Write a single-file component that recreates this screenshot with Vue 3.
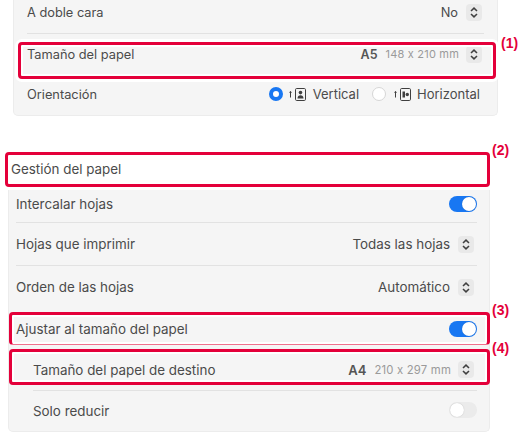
<script setup>
const rowsA = [
  { label: 'Intercalar hojas', cls: 'r-a', toggle: true },
  { label: 'Hojas que imprimir', cls: 'r-b', value: 'Todas las hojas', line: true },
  { label: 'Orden de las hojas', cls: 'r-b', value: 'Automático', line: true },
]
</script>

<template>
  <div class="page">
    <section class="panel top">
      <div class="row r1">
        <span>A doble cara</span>
        <span class="end"><span>No</span>
          <span class="stepper"><svg viewBox="0 0 16 16"><path d="M5 6.5 8 3.6l3 2.9M5 9.5l3 2.9 3-2.9"/></svg></span>
        </span>
      </div>
      <div class="row r2 line">
        <span>Tamaño del papel</span>
        <span class="end"><b class="size">A5</b><span class="dim">148 x 210 mm</span>
          <span class="stepper"><svg viewBox="0 0 16 16"><path d="M5 6.5 8 3.6l3 2.9M5 9.5l3 2.9 3-2.9"/></svg></span>
        </span>
        <div class="mark m1"><span class="tag t1">(1)</span></div>
      </div>
      <div class="row r3">
        <span>Orientación</span>
        <span class="end orient">
          <span class="radio on"></span>
          <svg class="oicon" viewBox="0 0 18 16"><path class="thin" d="M1.500 11.500V5.500"/><path d="M0 6.800 1.500 5 3 6.800z"/><rect class="thin" x="6.500" y="2.500" width="10" height="12" rx="1.200"/><circle cx="11.500" cy="6.600" r="1.800"/><path d="M8.500 12.500c0-2.300 1.300-3.200 3-3.200s3 .9 3 3.200z"/></svg>
          <span>Vertical</span>
          <span class="radio off"></span>
          <svg class="oicon second" viewBox="0 0 18 16"><path class="thin" d="M1.500 11.500V5.500"/><path d="M0 6.800 1.500 5 3 6.800z"/><rect class="thin" x="6.500" y="2.500" width="10" height="12" rx="1.200"/><path d="M8.500 5.500h2.500v6H8.500z"/><circle cx="13.300" cy="8.500" r="1.700"/></svg>
          <span>Horizontal</span>
        </span>
      </div>
    </section>

    <div class="heading">
      Gestión del papel
      <div class="mark m2"><span class="tag t2">(2)</span></div>
    </div>

    <section class="panel lower">
      <div v-for="r in rowsA" :key="r.label" class="row" :class="[r.cls, { line: r.line }]">
        <span>{{ r.label }}</span>
        <span class="toggle on" v-if="r.toggle"></span>
        <span class="end" v-else><span>{{ r.value }}</span>
          <span class="stepper"><svg viewBox="0 0 16 16"><path d="M5 6.5 8 3.6l3 2.9M5 9.5l3 2.9 3-2.9"/></svg></span>
        </span>
      </div>
      <div class="row r-c line">
        <span>Ajustar al tamaño del papel</span>
        <span class="toggle on"></span>
        <div class="mark m3"><span class="tag t3">(3)</span></div>
      </div>
      <div class="row r-d">
        <span class="indent">Tamaño del papel de destino</span>
        <span class="end"><b class="size">A4</b><span class="dim">210 x 297 mm</span>
          <span class="stepper"><svg viewBox="0 0 16 16"><path d="M5 6.5 8 3.6l3 2.9M5 9.5l3 2.9 3-2.9"/></svg></span>
        </span>
        <div class="mark m4"><span class="tag t4">(4)</span></div>
      </div>
      <div class="row r-e">
        <span>Solo reducir</span>
        <span class="toggle off"></span>
      </div>
    </section>
  </div>
</template>

<style>
html, body { margin: 0; background: #fff; }
</style>

<style scoped>
.page {
  width: 520px;
  height: 436px;
  overflow: hidden;
  font-family: Inter, "Liberation Sans", sans-serif;
  font-size: 12.8px;
  color: #4b4b4b;
  box-sizing: border-box;
}
.panel {
  background: #f5f5f5;
  border: 1px solid #ececec;
  border-top: 0;
  box-sizing: border-box;
  border-radius: 0 0 5px 5px;
}
.top { margin: 0 22px 0 13px; height: 116px; padding: 0 13px; }
.lower {
  margin: 3px 30px 0 8px;
  height: 242px;
  padding: 0 12px 0 7px;
  font-size: 13.4px;
}
.row {
  position: relative;
  display: flex;
  align-items: center;
  justify-content: space-between;
  box-sizing: border-box;
}
.line { border-top: 1px solid #e2e2e2; }
.r1 { height: 33px; padding-bottom: 9px; }
.r2 { height: 41px; }
.r3 { height: 41px; padding-bottom: 1px; }
.r-a { height: 32px; padding-bottom: 5px; }
.r-b { height: 43px; }
.r-c { height: 41px; border-top-color: transparent; padding-bottom: 1px; }
.r-d { height: 41px; }
.r-e { height: 42px; margin-left: 17px; border-top: 1px solid #e2e2e2; padding-bottom: 1px; }
.indent { margin-left: 17px; }
.end { display: flex; align-items: center; gap: 8px; margin-right: 2px; }
.lower .end { margin-right: 3px; }
.stepper {
  width: 16px;
  height: 17px;
  border-radius: 4px;
  background: #e9e9e9;
  display: block;
}
.stepper svg { display: block; width: 16px; height: 17px; fill: none; stroke: #3f3f3f; stroke-width: 1.5; }
.size { font-weight: 600; font-size: 12.5px; color: #555; }
.lower .size { font-size: 13px; }
.dim { font-size: 11px; color: #9a9a9a; letter-spacing: 0.2px; margin-right: -1px; }
.lower .dim { font-size: 11.3px; }
.end.orient { gap: 0; margin-right: 4px; font-size: 13px; }
.radio {
  width: 14px;
  height: 14px;
  border-radius: 50%;
  box-sizing: border-box;
  display: block;
}
.radio.on { background: #fff; border: 4px solid #1877f2; }
.radio.off { background: #fff; border: 1px solid #d6d6d6; margin-left: 13px; }
.oicon { width: 18px; height: 16px; margin: 0 6px; fill: #3f3f3f; display: block; }
.oicon.second { margin: 0 5px 0 8px; }
.oicon .thin { fill: none; stroke: #3f3f3f; stroke-width: 1; }
.toggle {
  width: 28px;
  height: 16px;
  border-radius: 8px;
  position: relative;
  display: block;
  flex: none;
}
.toggle::after {
  content: "";
  position: absolute;
  top: 1px;
  width: 14px;
  height: 14px;
  border-radius: 50%;
  background: #fff;
  box-shadow: 0 0 1px rgba(0, 0, 0, 0.25);
}
.toggle.on { background: #1877f2; }
.toggle.on::after { right: 1px; }
.toggle.off { background: #ebebeb; margin-bottom: 2px; }
.toggle.off::after { left: 1px; }
.heading {
  position: relative;
  margin: 36px 30px 0 11px;
  height: 35px;
  line-height: 34px;
  font-size: 13.4px;
}
.mark {
  position: absolute;
  box-sizing: border-box;
  border: 3px solid #e4003a;
  border-radius: 4px;
  pointer-events: none;
}
.m1 {
  left: -9px; right: -12px; top: 8px; height: 37px;
  box-shadow: 0 0 0 3px #fff, inset 0 0 0 2px #fff;
}
.m2 { left: -6px; right: 0; top: 0; bottom: 0; }
.m3 {
  left: -7px; right: -13px; top: 3px; height: 33px;
  border-bottom: 1px solid #f0708c;
  box-shadow: inset 0 0 0 2px #fff;
}
.m4 {
  left: -7px; right: -13px; top: 0; height: 36px;
  box-shadow: inset 0 0 0 2px #fff;
}
.tag {
  position: absolute;
  left: 100%;
  font: bold 14px/16px "Liberation Sans", sans-serif;
  color: #e4003a;
  white-space: nowrap;
}
.t1 { margin-left: 8px; top: -10px; }
.t2 { margin-left: 5px; top: -13px; }
.t3 { margin-left: 5px; top: -13px; }
.t4 { margin-left: 5px; top: -12px; }
</style>
